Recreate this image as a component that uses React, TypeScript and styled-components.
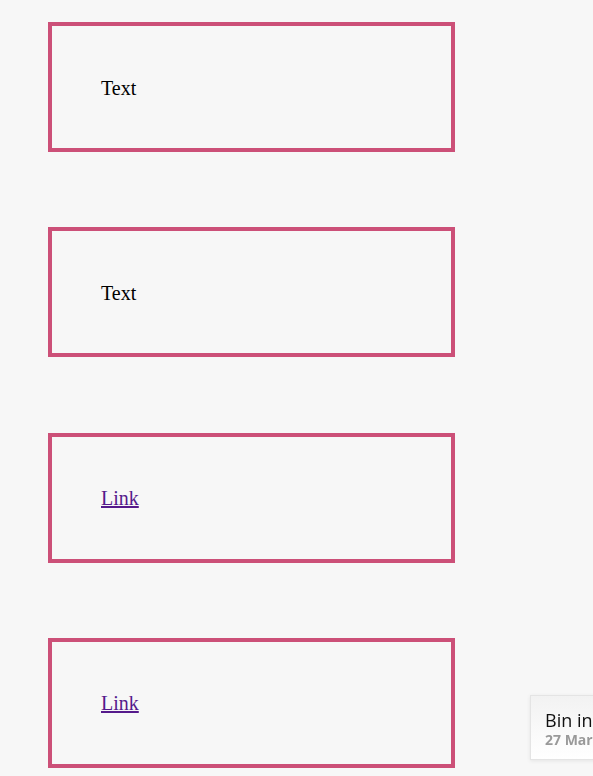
import styled, { createGlobalStyle } from "styled-components";

const PINK = "#cc5078";
const BG = "#f7f7f7";

const Global = createGlobalStyle`
  html, body {
    margin: 0;
    padding: 0;
    background: ${BG};
  }
  body {
    font-family: "Liberation Serif", "Times New Roman", serif;
    overflow: hidden;
  }
`;

const Page = styled.div`
  display: flex;
  flex-direction: column;
  gap: 75.3px;
  padding: 22px 0 0 48px;
  min-height: 776px;
  box-sizing: border-box;
`;

const Box = styled.div`
  box-sizing: border-box;
  width: 407px;
  height: 130px;
  border: 4px solid ${PINK};
  display: flex;
  align-items: center;
  padding: 2px 0 0 49px;
  font-size: 20px;
  color: #000;
`;

const Link = styled.a`
  color: #551a8b;
  text-decoration: underline;
`;

const Toast = styled.div`
  position: fixed;
  left: 530px;
  top: 695px;
  width: 200px;
  height: 65px;
  box-sizing: border-box;
  padding: 13px 0 0 14px;
  background: linear-gradient(#f2f2f2, #ffffff);
  border: 1px solid #e4e4e4;
  box-shadow: 0 1px 4px rgba(0, 0, 0, 0.08);
  font-family: "Open Sans", "Liberation Sans", sans-serif;
  white-space: nowrap;
`;

const ToastTitle = styled.div`
  font-size: 18px;
  line-height: 22px;
  color: #111;
`;

const ToastDate = styled.div`
  font-size: 14px;
  line-height: 18px;
  font-weight: 700;
  color: #999;
`;

export default function App() {
  return (
    <>
      <Global />
      <Page>
        <Box>Text</Box>
        <Box>Text</Box>
        <Box>
          <Link href="#">Link</Link>
        </Box>
        <Box>
          <Link href="#">Link</Link>
        </Box>
      </Page>
      <Toast>
        <ToastTitle>Bin in the box</ToastTitle>
        <ToastDate>27 March 2019</ToastDate>
      </Toast>
    </>
  );
}
